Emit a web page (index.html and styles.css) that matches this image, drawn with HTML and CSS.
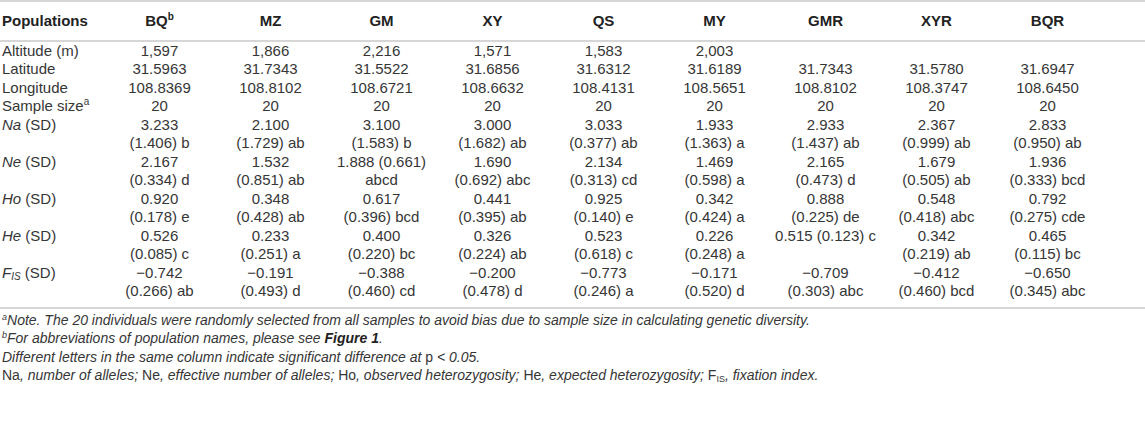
FILE: index.html
```html
<!DOCTYPE html>
<html lang="en">
<head>
  <meta charset="UTF-8" />
  <title>Genetic diversity of populations</title>
  <meta name="viewport" content="width=device-width, initial-scale=1" />
  <link rel="stylesheet" href="styles.css">
</head>
<body>
  <div class="table-wrap">
    <table class="data">
      <colgroup>
        <col class="col-label">
        <col span="8" class="col-pop">
        <col class="col-last">
      </colgroup>
      <thead>
        <tr>
          <th class="label">Populations</th>
          <th>BQ<sup>b</sup></th>
          <th>MZ</th>
          <th>GM</th>
          <th>XY</th>
          <th>QS</th>
          <th>MY</th>
          <th>GMR</th>
          <th>XYR</th>
          <th>BQR</th>
        </tr>
      </thead>
      <tbody>
        <tr class="first">
          <td class="label">Altitude (m)</td>
          <td>1,597</td><td>1,866</td><td>2,216</td><td>1,571</td><td>1,583</td><td>2,003</td><td></td><td></td><td></td>
        </tr>
        <tr>
          <td class="label">Latitude</td>
          <td>31.5963</td><td>31.7343</td><td>31.5522</td><td>31.6856</td><td>31.6312</td><td>31.6189</td><td>31.7343</td><td>31.5780</td><td>31.6947</td>
        </tr>
        <tr>
          <td class="label">Longitude</td>
          <td>108.8369</td><td>108.8102</td><td>108.6721</td><td>108.6632</td><td>108.4131</td><td>108.5651</td><td>108.8102</td><td>108.3747</td><td>108.6450</td>
        </tr>
        <tr>
          <td class="label">Sample size<sup>a</sup></td>
          <td>20</td><td>20</td><td>20</td><td>20</td><td>20</td><td>20</td><td>20</td><td>20</td><td>20</td>
        </tr>
        <tr>
          <td class="label"><i>Na</i> (SD)</td>
          <td>3.233<br>(1.406) b</td>
          <td>2.100<br>(1.729) ab</td>
          <td>3.100<br>(1.583) b</td>
          <td>3.000<br>(1.682) ab</td>
          <td>3.033<br>(0.377) ab</td>
          <td>1.933<br>(1.363) a</td>
          <td>2.933<br>(1.437) ab</td>
          <td>2.367<br>(0.999) ab</td>
          <td>2.833<br>(0.950) ab</td>
        </tr>
        <tr>
          <td class="label"><i>Ne</i> (SD)</td>
          <td>2.167<br>(0.334) d</td>
          <td>1.532<br>(0.851) ab</td>
          <td>1.888 (0.661)<br>abcd</td>
          <td>1.690<br>(0.692) abc</td>
          <td>2.134<br>(0.313) cd</td>
          <td>1.469<br>(0.598) a</td>
          <td>2.165<br>(0.473) d</td>
          <td>1.679<br>(0.505) ab</td>
          <td>1.936<br>(0.333) bcd</td>
        </tr>
        <tr>
          <td class="label"><i>Ho</i> (SD)</td>
          <td>0.920<br>(0.178) e</td>
          <td>0.348<br>(0.428) ab</td>
          <td>0.617<br>(0.396) bcd</td>
          <td>0.441<br>(0.395) ab</td>
          <td>0.925<br>(0.140) e</td>
          <td>0.342<br>(0.424) a</td>
          <td>0.888<br>(0.225) de</td>
          <td>0.548<br>(0.418) abc</td>
          <td>0.792<br>(0.275) cde</td>
        </tr>
        <tr>
          <td class="label"><i>He</i> (SD)</td>
          <td>0.526<br>(0.085) c</td>
          <td>0.233<br>(0.251) a</td>
          <td>0.400<br>(0.220) bc</td>
          <td>0.326<br>(0.224) ab</td>
          <td>0.523<br>(0.618) c</td>
          <td>0.226<br>(0.248) a</td>
          <td>0.515 (0.123) c</td>
          <td>0.342<br>(0.219) ab</td>
          <td>0.465<br>(0.115) bc</td>
        </tr>
        <tr class="last">
          <td class="label"><i>F<sub>IS</sub></i> (SD)</td>
          <td>&minus;0.742<br>(0.266) ab</td>
          <td>&minus;0.191<br>(0.493) d</td>
          <td>&minus;0.388<br>(0.460) cd</td>
          <td>&minus;0.200<br>(0.478) d</td>
          <td>&minus;0.773<br>(0.246) a</td>
          <td>&minus;0.171<br>(0.520) d</td>
          <td>&minus;0.709<br>(0.303) abc</td>
          <td>&minus;0.412<br>(0.460) bcd</td>
          <td>&minus;0.650<br>(0.345) abc</td>
        </tr>
      </tbody>
    </table>
  </div>

  <div class="notes">
    <p><sup>a</sup>Note. The 20 individuals were randomly selected from all samples to avoid bias due to sample size in calculating genetic diversity.</p>
    <p><sup>b</sup>For abbreviations of population names, please see <b>Figure 1</b>.</p>
    <p>Different letters in the same column indicate significant difference at <span class="up">p</span> &lt; 0.05.</p>
    <p><span class="up">Na</span>, number of alleles; <span class="up">Ne</span>, effective number of alleles; <span class="up">Ho</span>, observed heterozygosity; <span class="up">He</span>, expected heterozygosity; <span class="up">F<sub>IS</sub></span>, fixation index.</p>
  </div>
</body>
</html>
```

FILE: styles.css
```css
body {
  font-family: 'Liberation Sans', Arial, sans-serif;
  color: #363636;
  background: #fff;
  margin: 0;
}
.table-wrap {
  border-top: 2px solid #d6d6d6;
  border-bottom: 2px solid #d6d6d6;
}
.data {
  width: 100%;
  border-collapse: collapse;
  table-layout: fixed;
  font-size: 15px;
  line-height: 18.5px;
}
.col-label {
  width: 104px;
}
.col-pop {
  width: 111px;
}
.data th,
.data td {
  padding: 0;
  text-align: center;
  vertical-align: top;
  white-space: nowrap;
}
.data th:last-child,
.data td:last-child {
  padding-right: 42px;
}
.data .label {
  text-align: left;
  padding-left: 2px;
}
.data thead th {
  color: #222;
  font-weight: bold;
  padding-top: 10px;
  padding-bottom: 9px;
  border-bottom: 2px solid #d6d6d6;
}
.data tbody tr.last td {
  padding-bottom: 6px;
}
.data sup {
  font-size: 10px;
  line-height: 0;
  vertical-align: 6px;
}
.data sub {
  font-size: 10px;
  line-height: 0;
  vertical-align: -2px;
}
.notes {
  font-size: 14px;
  line-height: 18.5px;
  font-style: italic;
  padding: 2px 2px 0;
}
.notes p {
  margin: 0;
}
.notes sup {
  font-size: 9px;
  line-height: 0;
  vertical-align: 5px;
}
.notes sub {
  font-size: 9px;
  line-height: 0;
  vertical-align: -2px;
}
.notes .up {
  font-style: normal;
}
.notes b {
  color: #222;
}
```
